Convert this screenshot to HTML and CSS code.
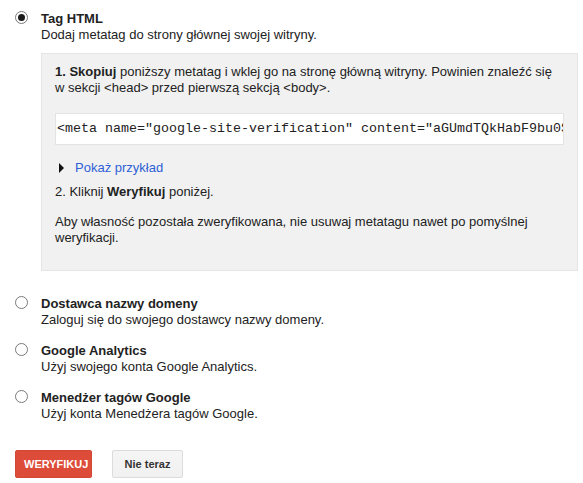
FILE: index.html
```html
<!DOCTYPE html>
<html lang="pl">
<head>
<meta charset="utf-8">
<title>Weryfikacja</title>
<link rel="stylesheet" href="styles.css">
</head>
<body>
<div class="page">
  <div class="option">
    <span class="radio checked"></span>
    <div class="option-body">
      <div class="title">Tag HTML</div>
      <div class="desc">Dodaj metatag do strony głównej swojej witryny.</div>
      <div class="panel">
        <p class="step"><b>1. Skopiuj</b> poniższy metatag i wklej go na stronę główną witryny. Powinien znaleźć się w sekcji &lt;head&gt; przed pierwszą sekcją &lt;body&gt;.</p>
        <div class="code">&lt;meta name="google-site-verification" content="aGUmdTQkHabF9bu0S7xK2pLqWv4" /&gt;</div>
        <div class="example"><span class="arrow"></span><a href="#" class="link">Pokaż przykład</a></div>
        <p class="step2">2. Kliknij <b>Weryfikuj</b> poniżej.</p>
        <p class="note">Aby własność pozostała zweryfikowana, nie usuwaj metatagu nawet po pomyślnej weryfikacji.</p>
      </div>
    </div>
  </div>
  <div class="option spaced-first">
    <span class="radio"></span>
    <div class="option-body">
      <div class="title">Dostawca nazwy domeny</div>
      <div class="desc">Zaloguj się do swojego dostawcy nazwy domeny.</div>
    </div>
  </div>
  <div class="option spaced">
    <span class="radio"></span>
    <div class="option-body">
      <div class="title">Google Analytics</div>
      <div class="desc">Użyj swojego konta Google Analytics.</div>
    </div>
  </div>
  <div class="option spaced">
    <span class="radio"></span>
    <div class="option-body">
      <div class="title">Menedżer tagów Google</div>
      <div class="desc">Użyj konta Menedżera tagów Google.</div>
    </div>
  </div>
  <div class="buttons">
    <button class="btn btn-red">WERYFIKUJ</button>
    <button class="btn btn-gray">Nie teraz</button>
  </div>
</div>
</body>
</html>
```
FILE: styles.css
```css
html, body {
  margin: 0;
  padding: 0;
  background: #fff;
}
body {
  font-family: "Liberation Sans", Arial, sans-serif;
  font-size: 13px;
  line-height: 16px;
  color: #222;
}
.page {
  padding: 11px 5px 0 15px;
}
.option {
  display: flex;
  align-items: flex-start;
  gap: 13px;
}
.spaced-first {
  margin-top: 25px;
}
.spaced {
  margin-top: 15px;
}
.option-body {
  flex: 1;
  min-width: 0;
}
.radio {
  flex: none;
  box-sizing: border-box;
  width: 13px;
  height: 13px;
  border: 1px solid #7a7a7a;
  border-radius: 50%;
  background: #fff;
  display: flex;
  align-items: center;
  justify-content: center;
}
.radio.checked::after {
  content: "";
  width: 7px;
  height: 7px;
  border-radius: 50%;
  background: #1a1a1a;
}
.title {
  font-weight: bold;
}
.panel {
  margin-top: 10px;
  background: #f1f1f1;
  border: 1px solid #e5e5e5;
  padding: 10px 13px 24px 13px;
}
.panel p {
  margin: 0;
}
.code {
  margin-top: 17px;
  box-sizing: border-box;
  height: 32px;
  background: #fff;
  border: 1px solid #e3e3e3;
  padding: 7px 0 0 1px;
  font-family: "Liberation Mono", "Courier New", monospace;
  font-size: 13.33px;
  line-height: 15px;
  white-space: nowrap;
  overflow: hidden;
}
.example {
  margin-top: 15px;
  padding-left: 4px;
  display: flex;
  align-items: center;
  gap: 11px;
}
.arrow {
  width: 0;
  height: 0;
  border-left: 5px solid #111;
  border-top: 5px solid transparent;
  border-bottom: 5px solid transparent;
}
.link {
  color: #2f5fd6;
  text-decoration: none;
}
.step2 {
  margin-top: 8px !important;
}
.note {
  margin-top: 14px !important;
}
.buttons {
  margin-top: 28px;
  display: flex;
  gap: 20px;
}
.btn {
  box-sizing: border-box;
  height: 28px;
  border-radius: 2px;
  font-family: "Liberation Sans", Arial, sans-serif;
  font-size: 11px;
  font-weight: bold;
  line-height: 26px;
  padding: 0 8px;
  margin: 0;
}
.btn-red {
  width: 77px;
  background: #dd4b39;
  border: 1px solid #d14836;
  color: #fff;
}
.btn-gray {
  width: 71px;
  background: linear-gradient(#f5f5f5, #f1f1f1);
  border: 1px solid #dcdcdc;
  color: #333;
}
```
